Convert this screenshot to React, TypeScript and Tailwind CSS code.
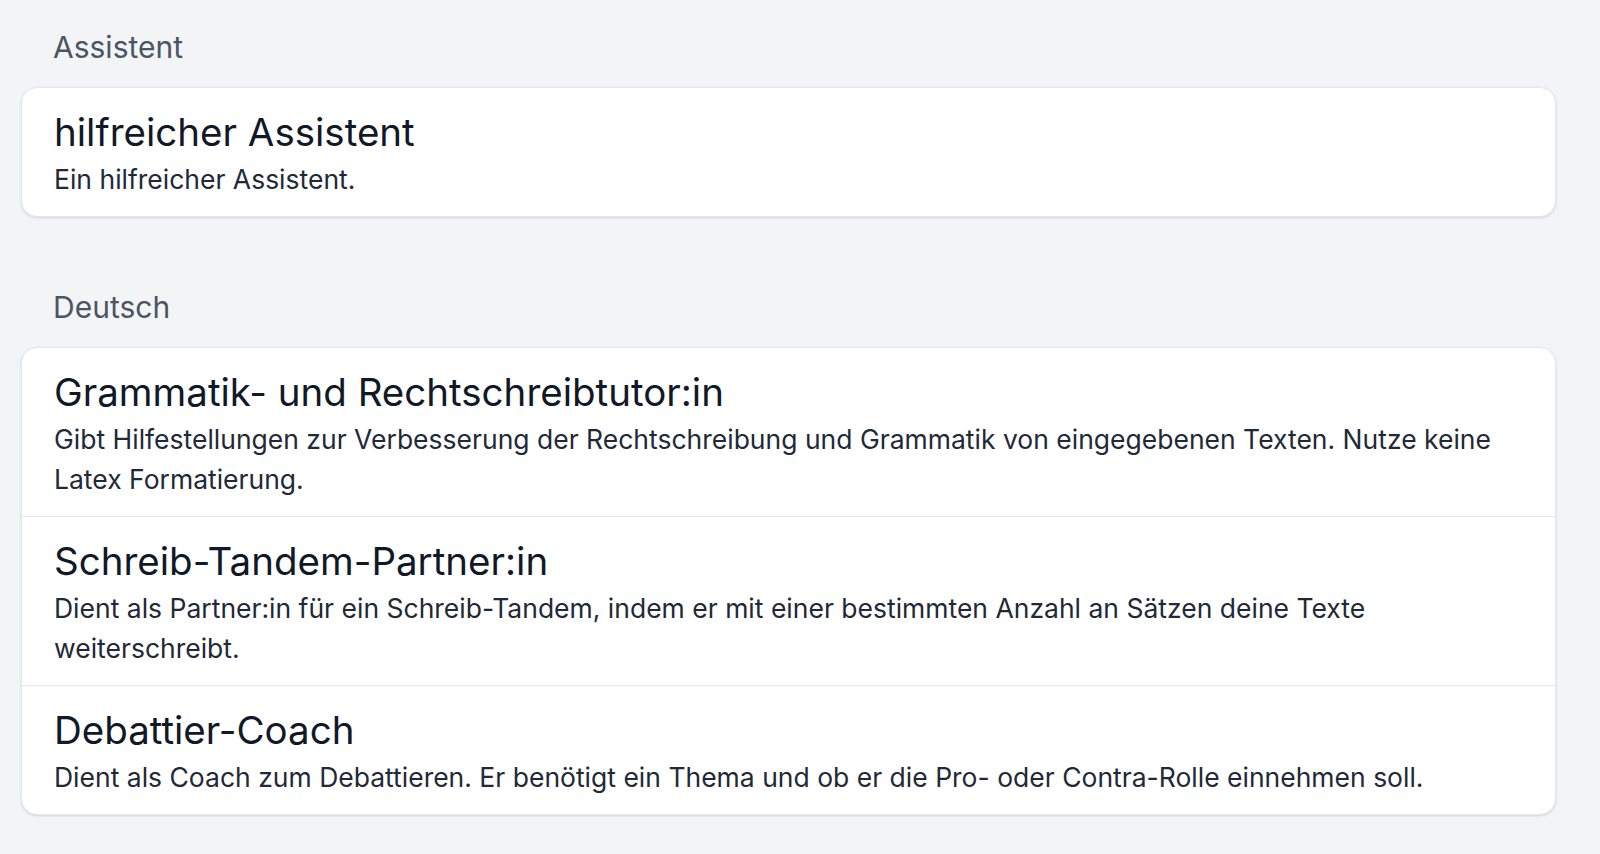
const sections = [
  {
    label: "Assistent",
    items: [
      {
        title: "hilfreicher Assistent",
        description: "Ein hilfreicher Assistent.",
      },
    ],
  },
  {
    label: "Deutsch",
    items: [
      {
        title: "Grammatik- und Rechtschreibtutor:in",
        description:
          "Gibt Hilfestellungen zur Verbesserung der Rechtschreibung und Grammatik von eingegebenen Texten. Nutze keine Latex Formatierung.",
      },
      {
        title: "Schreib-Tandem-Partner:in",
        description:
          "Dient als Partner:in für ein Schreib-Tandem, indem er mit einer bestimmten Anzahl an Sätzen deine Texte weiterschreibt.",
      },
      {
        title: "Debattier-Coach",
        description:
          "Dient als Coach zum Debattieren. Er benötigt ein Thema und ob er die Pro- oder Contra-Rolle einnehmen soll.",
      },
    ],
  },
];

function App() {
  return (
    <main className="min-h-screen bg-[#f3f4f6] pl-[21px] pr-[44px] pt-[27px] font-['Inter','Noto_Sans',sans-serif]">
      {sections.map((section, i) => (
        <section key={section.label} className={i > 0 ? "mt-[70px]" : ""}>
          <h2 className="pl-[32px] text-[30px] leading-[40px] text-[#4b5563]">
            {section.label}
          </h2>
          <div className="mt-[20px] overflow-hidden rounded-2xl border border-[#e5e7eb] bg-white shadow-sm">
            {section.items.map((item, j) => (
              <article
                key={item.title}
                className={
                  "px-[32px] pt-[20px] pb-[17px] " +
                  (j > 0 ? "border-t border-[#e5e7eb]" : "")
                }
              >
                <h3 className="text-[38.5px] leading-[48px] text-[#111827]">
                  {item.title}
                </h3>
                <p className="mt-[3px] text-[26.5px] leading-[40px] text-[#1f2937]">
                  {item.description}
                </p>
              </article>
            ))}
          </div>
        </section>
      ))}
    </main>
  );
}

export default App;
